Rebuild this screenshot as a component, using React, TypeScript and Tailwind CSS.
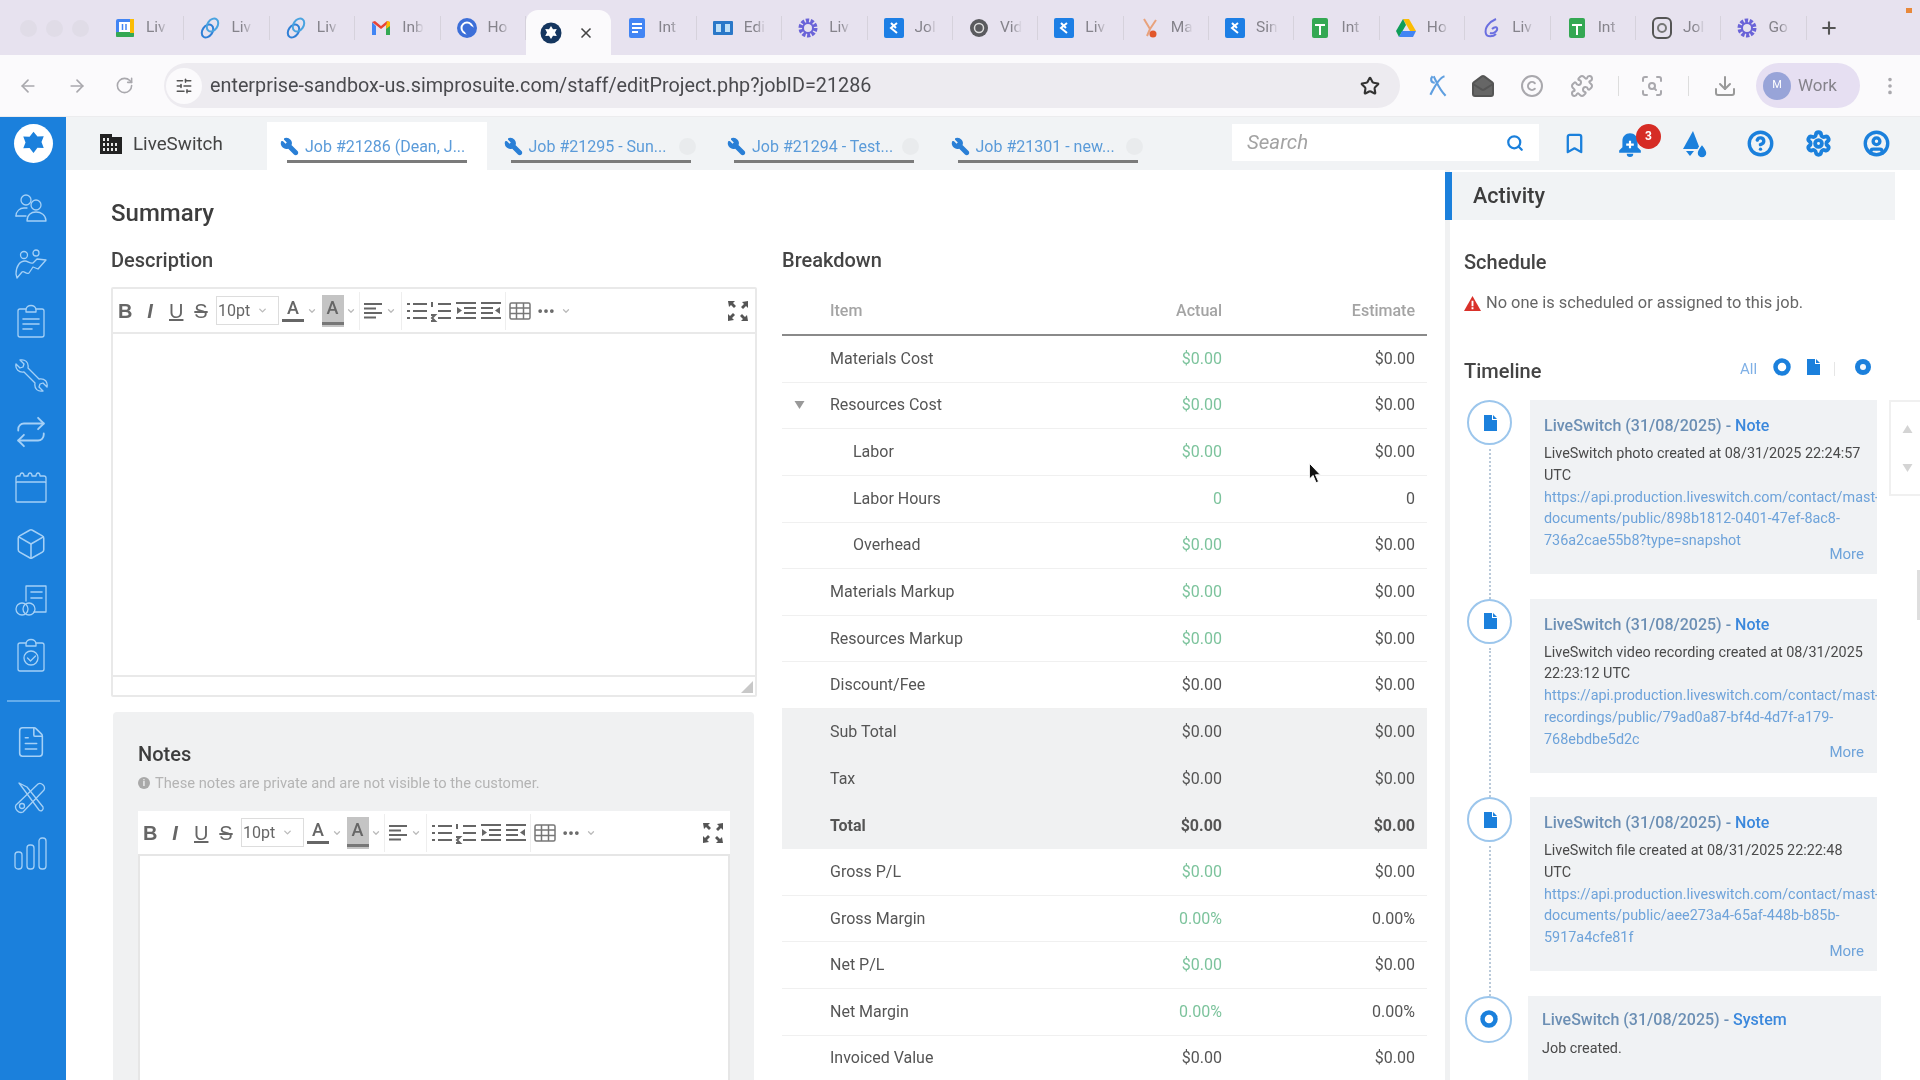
import {
  ArrowLeft, ArrowRight, Bookmark, Box, ChevronDown, CircleHelp, CircleUser, ClipboardList, Copyright,
  Download, Ellipsis, FileText, MailOpen, MoreVertical, Plus, Puzzle,
  Repeat, RotateCw, ScanSearch, Search, Settings, SlidersHorizontal, Star, Wrench, X,
} from "lucide-react";

const tabs = [
  { kind: "gcal", label: "Liv" },
  { kind: "rings", label: "Liv" },
  { kind: "rings", label: "Liv" },
  { kind: "gmail", label: "Inb" },
  { kind: "hub", label: "Ho" },
  { kind: "simpro", label: "", active: true },
  { kind: "docs", label: "Int" },
  { kind: "book", label: "Edi" },
  { kind: "gear", label: "Liv" },
  { kind: "jira", label: "Jol" },
  { kind: "dark", label: "Vid" },
  { kind: "jira", label: "Liv" },
  { kind: "spot", label: "Ma" },
  { kind: "jira", label: "Sin" },
  { kind: "sheet", label: "Int" },
  { kind: "drive", label: "Ho" },
  { kind: "swirl", label: "Liv" },
  { kind: "sheet", label: "Int" },
  { kind: "outline", label: "Jol" },
  { kind: "gear", label: "Go" },
];

function TabIcon({ kind }: { kind: string }) {
  return (
    <svg viewBox="0 0 22 22" className="h-[22px] w-[22px] shrink-0">
      {kind === "gcal" && (
        <>
          <rect x="2" y="2" width="18" height="18" rx="2" fill="#4285f4" />
          <rect x="2" y="15" width="18" height="5" rx="1" fill="#34a853" />
          <rect x="16" y="2" width="4" height="14" fill="#fbbc04" />
          <rect x="5" y="5" width="11" height="10" fill="#fff" />
          <path d="M8.5 7v6M12 7v6" stroke="#4285f4" strokeWidth="1.5" />
        </>
      )}
      {kind === "rings" && (
        <g fill="none" stroke="#2f7fd6" strokeWidth="2">
          <ellipse cx="8.500" cy="14" rx="5" ry="7" transform="rotate(35 8.500 14)" />
          <ellipse cx="13.500" cy="8" rx="5" ry="7" transform="rotate(35 13.500 8)" stroke="#4aa3e0" />
        </g>
      )}
      {kind === "gmail" && (
        <>
          <path d="M2 5v13h4V9z" fill="#4285f4" />
          <path d="M20 5v13h-4V9z" fill="#34a853" />
          <path d="M2 5l9 7 9-7-3-1-6 5-6-5z" fill="#ea4335" />
          <path d="M17 4l3 1v4l-4 3z" fill="#fbbc04" />
        </>
      )}
      {kind === "hub" && (
        <>
          <circle cx="11" cy="11" r="10" fill="#3d6fd8" />
          <circle cx="11" cy="11" r="5.5" fill="none" stroke="#fff" strokeWidth="2" />
          <circle cx="14" cy="14" r="5" fill="#3d6fd8" />
        </>
      )}
      {kind === "simpro" && (
        <>
          <circle cx="11" cy="11" r="10.500" fill="#15365f" />
          <path d="M11 4l2 3.200 3.800-.2-1.800 3.500 1.800 3.500-3.800-.2-2 3.200-2-3.200-3.800.2 1.800-3.500L5.200 7 9 7.200z" fill="#fff" />
        </>
      )}
      {kind === "docs" && (
        <>
          <rect x="3" y="1" width="16" height="20" rx="2" fill="#4285f4" />
          <path d="M6 7h10M6 11h10M6 15h6" stroke="#fff" strokeWidth="1.8" />
        </>
      )}
      {kind === "book" && (
        <>
          <rect x="1" y="4" width="20" height="14" rx="1" fill="#2a78c8" />
          <path d="M4 7h5v8H4zM13 7h5v8h-5z" fill="#bfe0f7" />
        </>
      )}
      {kind === "gear" && (
        <>
          <circle cx="11" cy="11" r="7" fill="none" stroke="#6a63d8" strokeWidth="5" strokeDasharray="3 1.4" />
          <circle cx="11" cy="11" r="5" fill="none" stroke="#6a63d8" strokeWidth="2" />
        </>
      )}
      {kind === "jira" && (
        <>
          <rect x="1" y="1" width="20" height="20" rx="2" fill="#1d7fe5" />
          <path d="M14 6l-6 5 6 5M8 6l5 5" fill="none" stroke="#fff" strokeWidth="2" />
        </>
      )}
      {kind === "dark" && (
        <>
          <circle cx="11" cy="11" r="9" fill="#5a5a5e" />
          <circle cx="11" cy="11" r="4.5" fill="none" stroke="#ddd" strokeWidth="1.5" />
        </>
      )}
      {kind === "spot" && (
        <>
          <path d="M5 2l6 10M17 3l-6 9M11 12l-3 7" stroke="#e8a27c" strokeWidth="2" fill="none" />
          <circle cx="14" cy="17" r="3.5" fill="#e2572b" />
        </>
      )}
      {kind === "sheet" && (
        <>
          <rect x="3" y="1" width="16" height="20" rx="2" fill="#34a853" />
          <path d="M6 8h10M11 8v10" stroke="#fff" strokeWidth="2" />
        </>
      )}
      {kind === "drive" && (
        <>
          <path d="M8 2h6l7 12h-6z" fill="#fbbc04" />
          <path d="M8 2l-7 12 3 6 7-12z" fill="#0f9d58" />
          <path d="M4 20h14l3-6H7z" fill="#4285f4" />
        </>
      )}
      {kind === "swirl" && (
        <path d="M16 2C9 5 4 11 6 17c1 3 7 3 10 0M12 12c3-3 6-2 5 1-1 2-4 4-7 3" fill="none" stroke="#6b6fe0" strokeWidth="2" />
      )}
      {kind === "outline" && (
        <>
          <rect x="2" y="1" width="18" height="20" rx="5" fill="none" stroke="#555" strokeWidth="2" />
          <circle cx="11" cy="11" r="4" fill="none" stroke="#777" strokeWidth="2" />
        </>
      )}
    </svg>
  );
}

function TabStrip() {
  return (
    <div className="flex h-[55px] shrink-0 bg-[#e7e2ef] pl-[99px]">
      <div className="absolute left-[20px] top-[20px] flex gap-[9px]">
        <span className="h-[17px] w-[17px] rounded-full bg-[#e0dce7]" />
        <span className="h-[17px] w-[17px] rounded-full bg-[#e0dce7]" />
        <span className="h-[17px] w-[17px] rounded-full bg-[#e0dce7]" />
      </div>
      {tabs.map((t, i) =>
        t.active ? (
          <div key={i} className="mt-[10px] flex h-[45px] w-[85.4px] items-center rounded-t-[12px] bg-[#fbfafc] pl-[14px]">
            <TabIcon kind={t.kind} />
            <X className="ml-[16px] h-[16px] w-[16px] text-[#444]" strokeWidth={2.5} />
          </div>
        ) : (
          <div key={i} className="flex w-[85.4px] items-center pl-[15px]">
            <TabIcon kind={t.kind} />
            <span className="ml-[10px] w-[22px] overflow-hidden whitespace-nowrap text-[15.5px] text-[#85838b] [mask-image:linear-gradient(to_right,black_55%,transparent)]">{t.label}</span>
            <span className="ml-auto h-[24px] w-px bg-[#d6d2dc]" />
          </div>
        ),
      )}
      <Plus className="ml-[12px] mt-[18px] h-[20px] w-[20px] text-[#555]" strokeWidth={2.5} />
      <span className="absolute right-[8px] top-[8px] h-[5px] w-[6px] bg-[#e8883a]" />
    </div>
  );
}

function AddressBar() {
  return (
    <div className="flex h-[62px] shrink-0 items-center border-b border-[#ececee] bg-[#fbfafc] text-[#a9a8ad]">
      <ArrowLeft className="ml-[18px] h-[20px] w-[20px]" />
      <ArrowRight className="ml-[29px] h-[20px] w-[20px]" />
      <RotateCw className="ml-[28px] h-[19px] w-[19px]" />
      <div className="ml-[30px] flex h-[45px] w-[1236px] items-center rounded-full bg-[#edebf0]">
        <span className="ml-[2px] flex h-[36px] w-[36px] items-center justify-center rounded-full bg-[#fbfafc]">
          <SlidersHorizontal className="h-[18px] w-[18px] text-[#555]" />
        </span>
        <span className="ml-[8px] whitespace-nowrap text-[19.8px] text-[#4a4a4e]">enterprise-sandbox-us.simprosuite.com/staff/editProject.php?jobID=21286</span>
        <Star className="ml-auto mr-[20px] h-[20px] w-[20px] text-[#333]" strokeWidth={2.5} />
      </div>
      <svg viewBox="0 0 24 24" className="ml-[25px] h-[26px] w-[26px]" fill="none" stroke="#5f9fe0" strokeWidth="2">
        <path d="M8 3c3 6 5 12 11 18M18 3C14 4 9 12 5 20M7 3c-2 2-2 6 2 6" />
      </svg>
      <MailOpen className="ml-[20px] h-[24px] w-[24px] text-[#555]" fill="#666" />
      <Copyright className="ml-[25px] h-[24px] w-[24px]" />
      <Puzzle className="ml-[26px] h-[24px] w-[24px]" />
      <span className="ml-[24px] h-[20px] w-px bg-[#ddd]" />
      <ScanSearch className="ml-[21px] h-[24px] w-[24px]" />
      <span className="ml-[24px] h-[20px] w-px bg-[#ddd]" />
      <Download className="ml-[24px] h-[24px] w-[24px] text-[#999]" />
      <div className="ml-[19px] flex h-[45px] w-[104px] items-center rounded-full bg-[#e6dff2]">
        <span className="ml-[7px] flex h-[28px] w-[28px] items-center justify-center rounded-full bg-[#98a4d8] text-[11px] text-white">M</span>
        <span className="ml-[7px] text-[17px] text-[#85838b]">Work</span>
      </div>
      <MoreVertical className="ml-[19px] h-[22px] w-[22px]" />
    </div>
  );
}

function NavIcon({ name }: { name: string }) {
  const cls = "h-[34px] w-[34px]";
  const p = { fill: "none", stroke: "currentColor", strokeWidth: 1.3, strokeLinejoin: "round" as const, strokeLinecap: "round" as const };
  if (name === "people") {
    return (
      <svg viewBox="0 0 34 34" className={cls} {...p}>
        <circle cx="12" cy="8" r="5" />
        <path d="M2 24c0-5 4-8 8-8h3" />
        <path d="M2 24h10" />
        <circle cx="22" cy="13" r="5" />
        <path d="M13 29c0-6 4-9 9-9s10 3 10 9z" />
      </svg>
    );
  }
  if (name === "shake") {
    return (
      <svg viewBox="0 0 34 34" className={cls} {...p}>
        <circle cx="10" cy="7" r="3.5" />
        <circle cx="22" cy="5" r="3" />
        <path d="M2 26c0-8 4-13 9-13 3 0 5 3 8 2l4-4 9 1-8 9-5-2-4 6c-3 2-5-3-7-1l-5 6z" />
      </svg>
    );
  }
  if (name === "clip") {
    return (
      <svg viewBox="0 0 34 34" className={cls} {...p}>
        <path d="M12 5H6a2 2 0 0 0-2 2v24a2 2 0 0 0 2 2h22a2 2 0 0 0 2-2V7a2 2 0 0 0-2-2h-6" />
        <path d="M12 6c0-6 10-6 10 0v2H12z" />
        <path d="M9 15h16M9 20h16M9 25h9" strokeWidth="1.6" />
      </svg>
    );
  }
  if (name === "spanner") {
    return (
      <svg viewBox="0 0 34 34" className={cls} {...p}>
        <path d="M2 5l4 4 3-1 1-3-4-4c5-1 9 2 8 8l11 11c6-1 9 3 8 8l-4-4-3 1-1 3 4 4c-5 1-9-2-8-8L10 13C5 14 1 10 2 5z" />
      </svg>
    );
  }
  if (name === "cal") {
    return (
      <svg viewBox="0 0 34 34" className={cls} {...p}>
        <path d="M2 11V7a2 2 0 0 1 2-2h2c0-4 4-4 4 0h4c0-4 4-4 4 0h4c0-4 4-4 4 0h4a2 2 0 0 1 2 2v4" />
        <rect x="2" y="11" width="30" height="20" rx="1" />
      </svg>
    );
  }
  if (name === "coins") {
    return (
      <svg viewBox="0 0 34 34" className={cls} {...p}>
        <path d="M12 18V3h20v26H20" />
        <path d="M17 9h11M17 15h11" strokeWidth="1.6" />
        <circle cx="8" cy="26" r="6" />
        <circle cx="15" cy="26" r="6" />
      </svg>
    );
  }
  if (name === "check") {
    return (
      <svg viewBox="0 0 34 34" className={cls} {...p}>
        <path d="M12 5H6a2 2 0 0 0-2 2v24a2 2 0 0 0 2 2h22a2 2 0 0 0 2-2V7a2 2 0 0 0-2-2h-6" />
        <path d="M12 6c0-6 10-6 10 0v2H12z" />
        <circle cx="17" cy="20" r="7" />
        <path d="M13.5 20l3 3 5-5" />
      </svg>
    );
  }
  if (name === "tools") {
    return (
      <svg viewBox="0 0 34 34" className={cls} {...p}>
        <path d="M5 2l20 27c2 2 5 0 4-3L13 6z" />
        <path d="M2 24L24 3c3-2 8 2 6 6L9 31c-4 2-9-3-7-7z" />
        <circle cx="8" cy="25" r="2.5" />
      </svg>
    );
  }
  if (name === "bars") {
    return (
      <svg viewBox="0 0 34 34" className={cls} {...p}>
        <rect x="1" y="15" width="7" height="17" rx="3" />
        <rect x="13" y="8" width="7" height="24" rx="3" />
        <rect x="25" y="1" width="7" height="31" rx="3" />
      </svg>
    );
  }
  if (name === "repeat") return <Repeat className={cls} strokeWidth={1.3} />;
  if (name === "box") return <Box className={cls} strokeWidth={1.1} />;
  if (name === "list") return <ClipboardList className={cls} strokeWidth={1.1} />;
  return <FileText className={cls} strokeWidth={1.1} />;
}

function Sidebar() {
  const top = ["people", "shake", "clip", "spanner", "repeat", "cal", "box", "coins", "check"];
  const bottom = ["file", "tools", "bars"];
  return (
    <aside className="flex w-[66px] shrink-0 flex-col items-center bg-[#1b80dc] text-[#a5d0f6]">
      <div className="mt-[7px] flex h-[39px] w-[39px] items-center justify-center rounded-full bg-white">
        <svg viewBox="0 0 24 24" className="h-[27px] w-[27px]" fill="#1b80dc">
          <path d="M12 1.500l3.500 4.300 5.600-.3-2 5.200 2 5.300-5.600-.3L12 20.500l-3.500-4.500-5.600.3 2-5.300-2-5.200 5.600.3z" />
        </svg>
      </div>
      <div className="mt-[29px] flex flex-col items-center gap-[21.8px] pr-[5px]">
        {top.map((n, i) => (
          <NavIcon key={i} name={n} />
        ))}
      </div>
      <div className="mt-[28px] h-[2px] w-[53px] bg-[#64aceb]" />
      <div className="mt-[23px] flex flex-col items-center gap-[22px] pr-[5px]">
        {bottom.map((n, i) => (
          <NavIcon key={i} name={n} />
        ))}
      </div>
    </aside>
  );
}

function JobTab({ label, active }: { label: string; active?: boolean }) {
  return (
    <div className={active ? "mr-[3.500px] mt-[5px] h-[48px] w-[220px] bg-white pl-[13px]" : "mt-[5px] h-[48px] w-[223.500px] pl-[13px]"}>
      <div className="flex h-[38px] items-center pt-[11px]">
        <Wrench className="h-[19px] w-[19px] -scale-x-100 text-[#2a7fd6]" fill="#2a7fd6" />
        <span className="ml-[6px] w-[150px] whitespace-nowrap text-[16px] text-[#5b9bd9]">{label}</span>
        {!active && <span className="h-[17px] w-[17px] rounded-full bg-[#e9ebed]" />}
      </div>
      <div className="ml-[7px] h-[3px] w-[180px] bg-[#7b7b7b]" />
    </div>
  );
}

function AppHeader() {
  return (
    <header className="flex h-[53px] shrink-0 bg-[#f1f3f5]">
      <div className="ml-[33px] mt-[15px] flex h-[24px] w-[168px] items-center">
        <svg viewBox="0 0 24 22" className="h-[22px] w-[24px]">
          <path d="M1 1h12v3h10v17H1z" fill="#222" />
          <path d="M4 5h2v3H4zM8 5h2v3H8zM4 10h2v3H4zM8 10h2v3H8zM12 10h2v3h-2zM16 10h2v3h-2zM4 15h2v3H4zM8 15h2v3H8zM12 15h2v3h-2zM16 15h2v3h-2z" fill="#e8e8e8" />
        </svg>
        <span className="ml-[10px] text-[18.8px] text-[#444]">LiveSwitch</span>
      </div>
      <JobTab label="Job #21286 (Dean, J..." active />
      <JobTab label="Job #21295 - Sun..." />
      <JobTab label="Job #21294 - Test..." />
      <JobTab label="Job #21301 - new..." />
      <div className="ml-[71px] mt-[7px] flex h-[37px] w-[307px] items-center bg-white pl-[15px] pr-[15px]">
        <span className="text-[20.5px] italic text-[#a3a3a3]">Search</span>
        <Search className="ml-auto h-[18px] w-[18px] text-[#1b80dc]" strokeWidth={3} />
      </div>
      <div className="flex items-center text-[#1b80dc]">
        <Bookmark className="ml-[24px] h-[23px] w-[23px]" strokeWidth={2.4} />
        <div className="relative ml-[31px]">
          <svg viewBox="0 0 24 24" className="h-[26px] w-[26px]" fill="#1b80dc">
            <path d="M12 2c-4 0-7 3-7 7v6l-3 3v2h20v-2l-3-3V9c0-4-3-7-7-7zM9 21a3 3 0 0 0 6 0z" />
            <path d="M11 9h2v2.500h2.500v2H13V16h-2v-2.500H8.500v-2H11z" fill="#fff" />
          </svg>
          <span className="absolute -right-[18px] -top-[7px] flex h-[25px] w-[25px] items-center justify-center rounded-full bg-[#d62c25] text-[12px] font-bold text-white">3</span>
        </div>
        <svg viewBox="0 0 26 28" className="ml-[39px] h-[28px] w-[26px]" fill="#1b80dc">
          <path d="M11 1L1 19h17z" />
          <path d="M20 14c3 4 5 6 5 9a5 5 0 0 1-10 0c0-3 2-5 5-9z" stroke="#f1f3f5" strokeWidth="1.5" />
          <path d="M4 21h8l-4 5z" />
        </svg>
        <CircleHelp className="ml-[39px] h-[27px] w-[27px]" strokeWidth={3} />
        <Settings className="ml-[31px] h-[27px] w-[27px]" strokeWidth={3.4} />
        <CircleUser className="ml-[31px] h-[27px] w-[27px]" strokeWidth={3} />
      </div>
    </header>
  );
}

function LinesIcon({ d, extra }: { d: string; extra?: string }) {
  return (
    <svg viewBox="0 0 22 22" className="h-[22px] w-[22px] shrink-0" fill="none" stroke="#666" strokeWidth="2">
      <path d={d} />
      {extra && <path d={extra} fill="#666" stroke="none" />}
    </svg>
  );
}

function EditorToolbar() {
  return (
    <div className="flex h-[43px] shrink-0 items-center text-[#666]">
      <span className="ml-[5px] w-[14px] text-center font-[family-name:'Liberation_Sans',sans-serif] text-[20px] font-bold">B</span>
      <span className="ml-[11px] w-[14px] text-center font-[family-name:'Liberation_Sans',sans-serif] text-[20px] font-bold italic">I</span>
      <span className="ml-[12px] w-[14px] text-center font-[family-name:'Liberation_Sans',sans-serif] text-[20px] underline">U</span>
      <span className="ml-[11px] w-[14px] text-center font-[family-name:'Liberation_Sans',sans-serif] text-[20px] line-through">S</span>
      <div className="ml-[8px] flex h-[29px] w-[63px] items-center border border-[#ddd] pl-[1px] text-[16px]">
        10pt
        <ChevronDown className="ml-[7px] h-[11px] w-[11px] text-[#bbb]" strokeWidth={3} />
      </div>
      <div className="ml-[2px] flex h-[28px] w-[24px] flex-col items-center">
        <span className="text-[18px] leading-[22px] font-medium">A</span>
        <span className="h-[3px] w-[22px] bg-[#666]" />
      </div>
      <ChevronDown className="ml-[2px] h-[10px] w-[10px] text-[#bbb]" strokeWidth={3} />
      <div className="ml-[4.500px] flex h-[32px] w-[22px] flex-col items-center bg-[#c4c4c4]">
        <span className="text-[18px] leading-[26px] font-medium">A</span>
        <span className="mt-[1px] h-[3px] w-[22px] bg-[#777]" />
      </div>
      <ChevronDown className="ml-[2px] h-[10px] w-[10px] text-[#bbb]" strokeWidth={3} />
      <span className="ml-[3px] h-[38px] w-px bg-[#eee]" />
      <span className="ml-[2.500px]">
        <LinesIcon d="M2 4h18M2 8.500h12M2 13h18M2 17.500h12" />
      </span>
      <ChevronDown className="ml-[2px] h-[10px] w-[10px] text-[#bbb]" strokeWidth={3} />
      <span className="ml-[5px] h-[38px] w-px bg-[#eee]" />
      <span className="ml-[4px]">
        <LinesIcon d="M7 4h14M7 11h14M7 18h14M1 4h3M1 11h3M1 18h3" />
      </span>
      <span className="ml-[2px]">
        <LinesIcon d="M8 4h13M8 11h13M8 18h13M2 2v5M1 15h4l-3 3 3 3H1" />
      </span>
      <span className="ml-[3px]">
        <LinesIcon d="M1 3h20M9 8h12M9 13h12M1 18h20" extra="M2 7l5 3.500-5 3.500z" />
      </span>
      <span className="ml-[3px]">
        <LinesIcon d="M1 3h20M1 8h12M1 13h12M1 18h20" extra="M20 7l-5 3.500 5 3.500z" />
      </span>
      <span className="ml-[3px] h-[38px] w-px bg-[#eee]" />
      <svg viewBox="0 0 22 22" className="ml-[3px] h-[22px] w-[22px]" fill="none" stroke="#777" strokeWidth="1.5">
        <rect x="1" y="3" width="20" height="16" rx="1.500" />
        <path d="M1 8h20M1 13.500h20M7.500 3v16M14.500 3v16" />
      </svg>
      <Ellipsis className="ml-[5px] h-[20px] w-[20px]" strokeWidth={2.5} />
      <ChevronDown className="ml-[5px] h-[10px] w-[10px] text-[#bbb]" strokeWidth={3} />
      <svg viewBox="0 0 22 22" className="ml-auto mr-[6px] h-[22px] w-[22px]" fill="#555">
        <path d="M1 1h7L6 3l3 3-2 2-3-3-2 2zM21 1v7l-2-2-3 3-2-2 3-3-2-2zM1 21v-7l2 2 3-3 2 2-3 3 2 2zM21 21h-7l2-2-3-3 2-2 3 3 2-2z" />
      </svg>
    </div>
  );
}

const rows = [
  { label: "Materials Cost", actual: "$0.00", est: "$0.00", green: true },
  { label: "Resources Cost", actual: "$0.00", est: "$0.00", green: true, arrow: true },
  { label: "Labor", actual: "$0.00", est: "$0.00", green: true, indent: true },
  { label: "Labor Hours", actual: "0", est: "0", green: true, indent: true },
  { label: "Overhead", actual: "$0.00", est: "$0.00", green: true, indent: true },
  { label: "Materials Markup", actual: "$0.00", est: "$0.00", green: true },
  { label: "Resources Markup", actual: "$0.00", est: "$0.00", green: true },
  { label: "Discount/Fee", actual: "$0.00", est: "$0.00" },
  { label: "Sub Total", actual: "$0.00", est: "$0.00", shade: true },
  { label: "Tax", actual: "$0.00", est: "$0.00", shade: true },
  { label: "Total", actual: "$0.00", est: "$0.00", shade: true, bold: true },
  { label: "Gross P/L", actual: "$0.00", est: "$0.00", green: true },
  { label: "Gross Margin", actual: "0.00%", est: "0.00%", green: true },
  { label: "Net P/L", actual: "$0.00", est: "$0.00", green: true },
  { label: "Net Margin", actual: "0.00%", est: "0.00%", green: true },
  { label: "Invoiced Value", actual: "$0.00", est: "$0.00" },
];

function Breakdown() {
  return (
    <section className="ml-[25px] w-[645px] shrink-0">
      <h2 className="mt-[79px] text-[20px] leading-[22px] font-medium text-[#444]">Breakdown</h2>
      <div className="mt-[23px] flex h-[42px] items-start border-b-2 border-[#8a8a8a] pt-[7px] text-[16px] leading-[20px] font-medium text-[#a4a4a4]">
        <span className="ml-[48px] flex-1">Item</span>
        <span className="w-[100px] text-right">Actual</span>
        <span className="w-[205px] pr-[12px] text-right">Estimate</span>
      </div>
      {rows.map((r) => (
        <div
          key={r.label}
          className={
            r.shade
              ? "flex h-[46.65px] items-center bg-[#f0f1f2] text-[16px] text-[#555]"
              : "flex h-[46.65px] items-center border-b border-[#f0f0f0] text-[16px] text-[#555]"
          }
        >
          <span className="flex w-[48px] justify-center pr-[14px]">
            {r.arrow && (
              <svg viewBox="0 0 10 8" className="h-[8px] w-[11px]" fill="#999">
                <path d="M0 0h10L5 8z" />
              </svg>
            )}
          </span>
          <span className={r.indent ? "flex-1 pl-[23px]" : r.bold ? "flex-1 font-bold" : "flex-1"}>{r.label}</span>
          <span className={r.green ? "w-[100px] text-right text-[#7cc39c]" : r.bold ? "w-[100px] text-right font-bold" : "w-[100px] text-right"}>{r.actual}</span>
          <span className={r.bold ? "w-[205px] pr-[12px] text-right font-bold" : "w-[205px] pr-[12px] text-right"}>{r.est}</span>
        </div>
      ))}
    </section>
  );
}

function Summary() {
  return (
    <section className="ml-[45px] w-[646px] shrink-0">
      <h1 className="mt-[30px] text-[24px] leading-[26px] font-medium text-[#3d3d3d]">Summary</h1>
      <h2 className="mt-[23px] text-[20px] leading-[22px] font-medium text-[#444]">Description</h2>
      <div className="mt-[16px] flex h-[410px] flex-col rounded-[2px] border-2 border-[#e9e9e9]">
        <EditorToolbar />
        <div className="flex-1 border-y-2 border-[#e9e9e9] bg-white" />
        <div className="relative h-[18px] shrink-0">
          <svg viewBox="0 0 12 12" className="absolute bottom-[2px] right-[2px] h-[12px] w-[12px]" fill="#c8c8c8">
            <path d="M12 0v12H0z" />
          </svg>
        </div>
      </div>
      <div className="mt-[15px] ml-[2px] h-[400px] w-[641px] rounded-t-[4px] bg-[#f0f1f2] px-[25px]">
        <h3 className="pt-[30px] text-[20px] leading-[24px] font-medium text-[#3d3d3d]">Notes</h3>
        <p className="mt-[8px] flex items-center whitespace-nowrap text-[14.7px] leading-[18px] text-[#b4b4b4]">
          <span className="mr-[5px] flex h-[12px] w-[12px] shrink-0 items-center justify-center rounded-full bg-[#a9a9a9] text-[9px] font-bold text-[#f0f1f2]">i</span>
          These notes are private and are not visible to the customer.
        </p>
        <div className="mt-[19px] flex h-[320px] w-[592px] flex-col bg-white">
          <EditorToolbar />
          <div className="flex-1 border-x-2 border-t-2 border-[#e6e6e6]" />
        </div>
      </div>
    </section>
  );
}

const notes = [
  {
    kind: "Note",
    body: ["LiveSwitch photo created at 08/31/2025 22:24:57", "UTC"],
    link: ["https://api.production.liveswitch.com/contact/mast-", "documents/public/898b1812-0401-47ef-8ac8-", "736a2cae55b8?type=snapshot"],
  },
  {
    kind: "Note",
    body: ["LiveSwitch video recording created at 08/31/2025", "22:23:12 UTC"],
    link: ["https://api.production.liveswitch.com/contact/mast-", "recordings/public/79ad0a87-bf4d-4d7f-a179-", "768ebdbe5d2c"],
  },
  {
    kind: "Note",
    body: ["LiveSwitch file created at 08/31/2025 22:22:48", "UTC"],
    link: ["https://api.production.liveswitch.com/contact/mast-", "documents/public/aee273a4-65af-448b-b85b-", "5917a4cfe81f"],
  },
];

function DocGlyph({ className }: { className: string }) {
  return (
    <svg viewBox="0 0 14 16" className={className} fill="#1b80dc">
      <path d="M1 0h8v5h5v11H1zM10 0l4 4h-4z" />
    </svg>
  );
}

function RingGlyph({ className }: { className: string }) {
  return (
    <svg viewBox="0 0 18 18" className={className} fill="none" stroke="#1b80dc" strokeWidth="4.500">
      <circle cx="9" cy="9" r="6.500" />
    </svg>
  );
}

function TimelineCard({ item }: { item: (typeof notes)[number] }) {
  return (
    <div className="flex h-[198.5px]">
      <div className="flex w-[45px] shrink-0 flex-col items-center">
        <div className="flex h-[45px] w-[45px] shrink-0 items-center justify-center rounded-full border-2 border-[#9cc6ec]">
          <DocGlyph className="h-[16px] w-[14px]" />
        </div>
        <div className="mt-[4px] flex-1 border-l-2 border-dotted border-[#b9c9d9]" />
      </div>
      <div className="relative ml-[18px] h-[174px] w-[347px] shrink-0 overflow-hidden bg-[#f0f2f4] pl-[14px] pt-[15px]">
        <div className="text-[16px] leading-[22px] font-medium text-[#6c8fb4]">
          LiveSwitch (31/08/2025) - <span className="text-[#3b88dc]">{item.kind}</span>
        </div>
        <div className="mt-[6px] text-[14.4px] leading-[21.8px] text-[#4a4a4a]">
          {item.body.map((l) => (
            <div key={l} className="whitespace-nowrap">{l}</div>
          ))}
          {item.link.map((l) => (
            <div key={l} className="whitespace-nowrap text-[#6ea3da]">{l}</div>
          ))}
        </div>
        <div className="-mt-[7px] pr-[13px] text-right text-[15px] leading-[18px] text-[#6ea3da]">More</div>
      </div>
    </div>
  );
}

function Activity() {
  return (
    <section className="relative ml-[18px] flex-1 border-l-[5px] border-[#f0f1f2]">
      <div className="-ml-[5px] mt-[2px] flex h-[48px] w-[450px] items-center border-l-[7px] border-[#1b80dc] bg-[#f1f3f5] pl-[21px] text-[21.5px] font-medium text-[#3d3d3d]">Activity</div>
      <div className="pl-[14px]">
        <h3 className="mt-[30px] text-[20px] leading-[24px] font-medium text-[#444]">Schedule</h3>
        <div className="mt-[17px] flex h-[24px] items-center text-[16.4px] text-[#666]">
          <svg viewBox="0 0 18 16" className="mr-[5px] h-[17px] w-[17px]" fill="#d9312a">
            <path d="M9 0l9 16H0z" />
            <path d="M8 5h2v6H8zM8 12h2v2H8z" fill="#fff" />
          </svg>
          No one is scheduled or assigned to this job.
        </div>
        <div className="mt-[44px] flex h-[24px] items-center">
          <h3 className="w-[83px] shrink-0 text-[20px] font-medium text-[#444]">Timeline</h3>
          <span className="ml-[193px] -mt-[3px] w-[18px] text-[15px] text-[#7fb0e6]">All</span>
          <RingGlyph className="ml-[15px] -mt-[9px] h-[18px] w-[18px]" />
          <DocGlyph className="ml-[15px] -mt-[9px] h-[16px] w-[14px]" />
          <span className="ml-[14px] -mt-[5px] h-[14px] w-px bg-[#e6e6e6]" />
          <span className="ml-[20px] -mt-[9px] flex h-[16px] w-[16px] items-center justify-center rounded-full bg-[#1b80dc]">
            <span className="h-[6px] w-[6px] rounded-full bg-[#f4f8fc]" />
          </span>
        </div>
        <div className="mt-[17px] pl-[3px]">
          {notes.map((n, i) => (
            <TimelineCard key={i} item={n} />
          ))}
          <div className="-ml-[2px] flex">
            <div className="flex h-[47px] w-[47px] shrink-0 items-center justify-center rounded-full border-2 border-[#9cc6ec]">
              <RingGlyph className="h-[18px] w-[18px]" />
            </div>
            <div className="ml-[16px] h-[90px] w-[353px] bg-[#f0f2f4] pl-[14px] pt-[13px]">
              <div className="text-[16px] leading-[22px] font-medium text-[#6c8fb4]">
                LiveSwitch (31/08/2025) - <span className="text-[#3b88dc]">System</span>
              </div>
              <div className="mt-[7px] text-[14.4px] leading-[21px] text-[#4a4a4a]">Job created.</div>
            </div>
          </div>
        </div>
      </div>
      <div className="absolute right-0 top-[230px] flex h-[96px] w-[31px] flex-col items-center justify-center gap-[31px] border-y-2 border-l-2 border-[#f0f0f0] bg-white pl-[3px]">
        <svg viewBox="0 0 10 8" className="h-[8px] w-[11px]" fill="#d4d4d4"><path d="M5 0l5 8H0z" /></svg>
        <svg viewBox="0 0 10 8" className="h-[8px] w-[11px]" fill="#d4d4d4"><path d="M0 0h10L5 8z" /></svg>
      </div>
      <div className="absolute right-0 top-[400px] h-[50px] w-[3px] bg-[#dedede]" />
    </section>
  );
}

export default function App() {
  return (
    <div className="relative flex h-screen w-screen flex-col overflow-hidden bg-white font-[family-name:Roboto,sans-serif] blur-[0.6px]">
      <TabStrip />
      <AddressBar />
      <div className="flex min-h-0 flex-1">
        <Sidebar />
        <div className="flex min-w-0 flex-1 flex-col">
          <AppHeader />
          <div className="flex min-h-0 flex-1 overflow-hidden">
            <Summary />
            <Breakdown />
            <Activity />
          </div>
        </div>
      </div>
      <svg viewBox="0 0 12 18" className="absolute left-[1308px] top-[462px] h-[22px] w-[15px]" fill="#111" stroke="#fff" strokeWidth="0.8">
        <path d="M1 1v13l3-3 2.500 6 2-1-2.500-5.500H10z" />
      </svg>
    </div>
  );
}
